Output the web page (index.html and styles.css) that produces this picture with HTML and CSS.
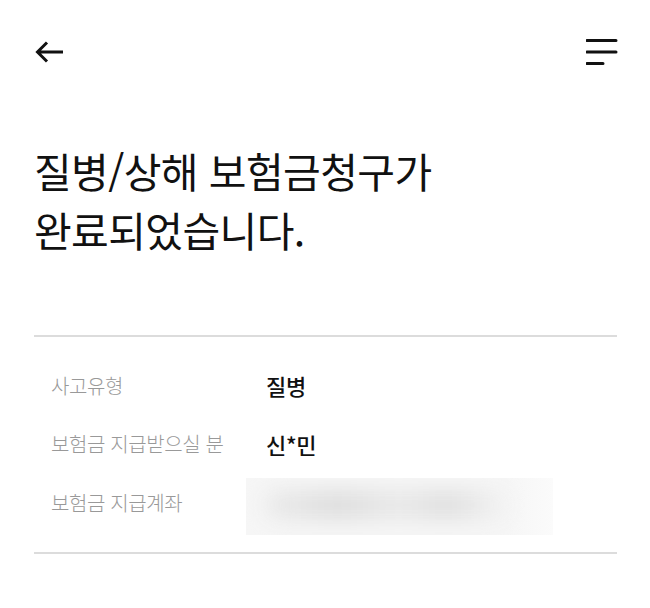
FILE: index.html
```html
<!doctype html>
<html lang="ko">
<head>
  <meta charset="UTF-8">
  <title>보험금청구 완료</title>
  <link rel="stylesheet" href="styles.css">
</head>
<body>
  <div class="container">
    <div class="header">
      <a class="back" href="#">
        <svg width="30" height="24" viewBox="0 0 30 24">
          <path d="M28 12H3M12 2.5L2.5 12L12 21.5" fill="none" stroke="#111" stroke-width="3"/>
        </svg>
      </a>
      <a class="menu" href="#">
        <svg width="32" height="30" viewBox="0 0 32 30">
          <path d="M1 3.5H30M1 15H30M1 26.5H17" fill="none" stroke="#111" stroke-width="3" stroke-linecap="round"/>
        </svg>
      </a>
    </div>

    <h1 class="title">질병/상해 보험금청구가<br>완료되었습니다.</h1>

    <div class="info">
      <div class="row">
        <span class="label">사고유형</span>
        <span class="value">질병</span>
      </div>
      <div class="row">
        <span class="label">보험금 지급받으실 분</span>
        <span class="value">신*민</span>
      </div>
      <div class="row">
        <span class="label">보험금 지급계좌</span>
        <div class="masked"><div class="blob"></div></div>
      </div>
    </div>
  </div>
</body>
</html>
```

FILE: styles.css
```css
body {
  margin: 0px;
  padding: 0px;
  background-color: #ffffff;
  font-family: "Noto Sans CJK KR", "Noto Sans", sans-serif;
  color: #111111;
}

a {
  text-decoration: none;
  color: inherit;
}

.container {
  padding: 0px 33px 0px 34px;
}

.header {
  height: 104px;
  display: flex;
  align-items: center;
  justify-content: space-between;
}

.header svg {
  display: block;
}

.back {
  margin-left: 1px;
}

.menu {
  margin-right: -1px;
}

.title {
  margin: 37px 0px 0px;
  font-size: 41px;
  font-weight: 400;
  line-height: 59px;
  letter-spacing: -0.6px;
}

.info {
  margin-top: 76px;
  padding: 19px 0px 20px 17px;
  border-top: solid 2px #dcdcdc;
  border-bottom: solid 2px #dcdcdc;
}

.row {
  display: flex;
  align-items: center;
  height: 58.5px;
}

.label {
  width: 215px;
  flex-shrink: 0;
  font-size: 20px;
  font-weight: 300;
  color: #999999;
  letter-spacing: -0.4px;
}

.value {
  font-size: 22px;
  font-weight: 500;
  color: #111111;
  letter-spacing: -0.3px;
}

.masked {
  margin-left: -20px;
  margin-top: 8px;
  width: 307px;
  height: 57px;
  background: linear-gradient(90deg, #f6f6f6 0%, #f6f6f6 85%, #fbfbfb 100%);
  overflow: hidden;
  position: relative;
}

.blob {
  position: absolute;
  left: 18px;
  top: 12px;
  width: 245px;
  height: 30px;
  background: linear-gradient(90deg, #ebebeb 0%, #dedede 30%, #e9e9e9 55%, #e0e0e0 75%, #f4f4f4 100%);
  border-radius: 15px;
  filter: blur(10px);
}
```
